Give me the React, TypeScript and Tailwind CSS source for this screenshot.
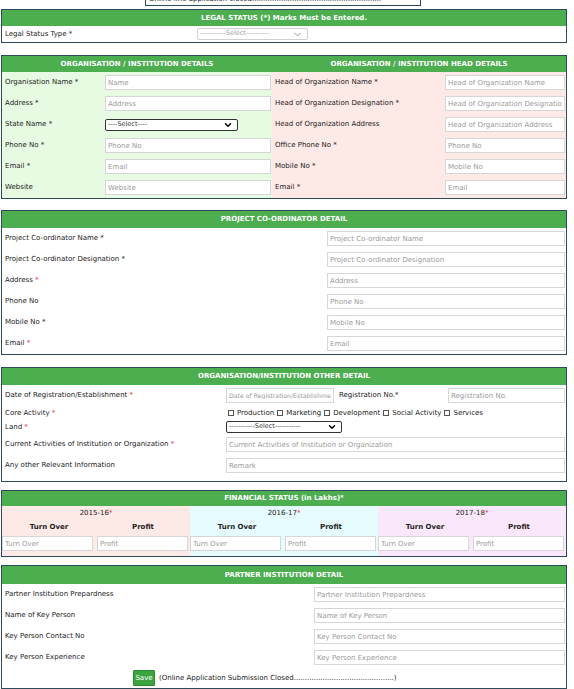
import { ChevronDown } from 'lucide-react';

const font = { fontFamily: '"DejaVu Sans", Verdana, sans-serif' };

function Header({ children, h = 'h-[15px]' }: { children: React.ReactNode; h?: string }) {
  return (
    <div className={`${h} bg-[#4cae4f] text-white font-bold text-[7px] flex items-center justify-center`}>
      {children}
    </div>
  );
}

function Star({ red }: { red?: boolean }) {
  return <span className={red ? 'text-[#e53935]' : ''}> *</span>;
}

function Input({ placeholder, className = '', small }: { placeholder: string; className?: string; small?: boolean }) {
  return (
    <input
      placeholder={placeholder}
      className={`h-[15px] bg-white border border-[#d6d6d6] px-[2px] ${
        small ? 'text-[6.2px]' : 'text-[7px]'
      } placeholder:text-[#9a9a9a] outline-none ${className}`}
    />
  );
}

function Select({ text, className = '', light }: { text: string; className?: string; light?: boolean }) {
  return (
    <div
      className={`h-[12px] bg-white rounded-[2px] border flex items-center justify-between pl-[2px] pr-[4px] text-[6.5px] ${
        light ? 'border-[#d0d0d0] text-[#a0a0a0]' : 'border-[#333] text-[#333]'
      } ${className}`}
    >
      <span>{text}</span>
      <ChevronDown size={light ? 11 : 10} strokeWidth={light ? 2 : 3.5} className={light ? 'text-[#888]' : 'text-black'} />
    </div>
  );
}

function Section({ children, className = '' }: { children: React.ReactNode; className?: string }) {
  return <div className={`border border-[#2d4b5b] ${className}`}>{children}</div>;
}

function Row({ label, star, red, placeholder, inputX }: { label: string; star?: boolean; red?: boolean; placeholder: string; inputX: string }) {
  return (
    <div className="h-[21px] flex items-center">
      <div className={`${inputX} shrink-0 pl-[3px] text-[7px] text-[#222]`}>
        {label}
        {star && <Star red={red} />}
      </div>
      <Input placeholder={placeholder} className="flex-1 min-w-0 mr-[1px]" />
    </div>
  );
}

export default function App() {
  const orgLeft: [string, boolean, string][] = [
    ['Organisation Name', true, 'Name'],
    ['Address', true, 'Address'],
    ['State Name', true, ''],
    ['Phone No', true, 'Phone No'],
    ['Email', true, 'Email'],
    ['Website', false, 'Website'],
  ];
  const orgRight: [string, boolean, string][] = [
    ['Head of Organization Name', true, 'Head of Organization Name'],
    ['Head of Organization Designation', true, 'Head of Organization Designation'],
    ['Head of Organization Address', false, 'Head of Organization Address'],
    ['Office Phone No', true, 'Phone No'],
    ['Mobile No', true, 'Mobile No'],
    ['Email', true, 'Email'],
  ];
  const coord: [string, boolean, boolean, string][] = [
    ['Project Co-ordinator Name', true, false, 'Project Co-ordinator Name'],
    ['Project Co-ordinator Designation', true, false, 'Project Co-ordinator Designation'],
    ['Address', true, true, 'Address'],
    ['Phone No', false, false, 'Phone No'],
    ['Mobile No', true, false, 'Mobile No'],
    ['Email', true, true, 'Email'],
  ];
  const partner = ['Partner Institution Prepardness', 'Name of Key Person', 'Key Person Contact No', 'Key Person Experience'];
  const years = [
    { y: '2015-16', bg: 'bg-[#fde9e5]' },
    { y: '2016-17', bg: 'bg-[#e5fbfd]' },
    { y: '2017-18', bg: 'bg-[#fbe7fb]' },
  ];

  return (
    <div className="w-[574px] h-[689px] overflow-hidden bg-white text-[#222]" style={font}>
      <div className="w-[566px] ml-[1px]">
        {/* closed notice, scrolled off top */}
        <div className="flex justify-start pl-[144px] -mt-[8px]">
          <div className="w-[276px] h-[14px] border border-[#2d4b5b] text-[7px] leading-[12px] pl-[3px] overflow-hidden">
            Online line application closed..........................................................
          </div>
        </div>

        {/* legal status */}
        <Section className="mt-[3px]">
          <Header h="h-[16px]">LEGAL STATUS (*) Marks Must be Entered.</Header>
          <div className="h-[16px] flex items-center">
            <div className="w-[195px] pl-[3px] text-[7px]">Legal Status Type *</div>
            <Select light text="-----------Select----------" className="w-[111px]" />
          </div>
        </Section>

        {/* organisation */}
        <Section className="mt-[12px] flex">
          <div className="w-[270px] bg-[#e6fbe1]">
            <Header h="h-[16px]">ORGANISATION / INSTITUTION DETAILS</Header>
            {orgLeft.map(([l, s, p]) =>
              p ? (
                <Row key={l} label={l} star={s} placeholder={p} inputX="w-[103px]" />
              ) : (
                <div key={l} className="h-[21px] flex items-center">
                  <div className="w-[103px] pl-[3px] text-[7px]">
                    {l}
                    <Star />
                  </div>
                  <Select text="----Select----" className="w-[133px]" />
                </div>
              )
            )}
          </div>
          <div className="flex-1 bg-[#fde9e5]">
            <Header h="h-[16px]">ORGANISATION / INSTITUTION HEAD DETAILS</Header>
            {orgRight.map(([l, s, p]) => (
              <Row key={l} label={l} star={s} placeholder={p} inputX="w-[173px]" />
            ))}
          </div>
        </Section>

        {/* coordinator */}
        <Section className="mt-[11px]">
          <Header h="h-[17px]">PROJECT CO-ORDINATOR DETAIL</Header>
          {coord.map(([l, s, r, p]) => (
            <Row key={l + p} label={l} star={s} red={r} placeholder={p} inputX="w-[325px]" />
          ))}
        </Section>

        {/* other detail */}
        <Section className="mt-[12px]">
          <Header h="h-[17px]">ORGANISATION/INSTITUTION OTHER DETAIL</Header>
          <div className="h-[21px] flex items-center">
            <div className="w-[224px] pl-[3px] text-[7px]">
              Date of Registration/Establishment
              <Star red />
            </div>
            <Input small placeholder="Date of Registration/Establishment" className="w-[108px]" />
            <div className="w-[114px] pl-[5px] text-[7px]">Registration No.*</div>
            <Input placeholder="Registration No." className="flex-1 min-w-0 mr-[1px]" />
          </div>
          <div className="h-[14px] flex items-center">
            <div className="w-[224px] pl-[3px] text-[7px]">
              Core Activity
              <Star red />
            </div>
            <div className="flex items-center text-[7px] pl-[2px]">
              {['Production', 'Marketing', 'Development', 'Social Activity', 'Services'].map((c) => (
                <span key={c} className="flex items-center mr-[3px]">
                  <span className="inline-block w-[6px] h-[6px] border border-[#555] mr-[3px]" />
                  {c}
                </span>
              ))}
            </div>
          </div>
          <div className="h-[14px] flex items-center">
            <div className="w-[224px] pl-[3px] text-[7px]">
              Land
              <Star red />
            </div>
            <Select text="-----------Select-----------" className="w-[116px]" />
          </div>
          <div className="h-[21px] flex items-center">
            <div className="w-[224px] pl-[3px] text-[7px]">
              Current Activities of Institution or Organization
              <Star red />
            </div>
            <Input placeholder="Current Activities of Institution or Organization" className="flex-1 min-w-0 mr-[1px]" />
          </div>
          <div className="h-[21px] flex items-center">
            <div className="w-[224px] pl-[3px] text-[7px]">Any other Relevant Information</div>
            <Input placeholder="Remark" className="flex-1 min-w-0 mr-[1px]" />
          </div>
          <div className="h-[5px]" />
        </Section>

        {/* financial */}
        <Section className="mt-[8px]">
          <Header h="h-[15px]">
            FINANCIAL STATUS (in Lakhs) <Star />
          </Header>
          <div className="grid grid-cols-3">
            {years.map((yr) => (
              <div key={yr.y} className={`${yr.bg} pb-[5px]`}>
                <div className="h-[14px] flex items-center justify-center text-[7px]">
                  {yr.y}
                  <Star red />
                </div>
                <div className="h-[14px] grid grid-cols-2 text-[7px] font-bold text-center items-center">
                  <div>Turn Over</div>
                  <div>Profit</div>
                </div>
                <div className="grid grid-cols-2 gap-[4px] pr-[2px] pt-[2px]">
                  <Input placeholder="Turn Over" className="w-full" />
                  <Input placeholder="Profit" className="w-full" />
                </div>
              </div>
            ))}
          </div>
        </Section>

        {/* partner */}
        <Section className="mt-[8px]">
          <Header h="h-[18px]">PARTNER INSTITUTION DETAIL</Header>
          {partner.map((p) => (
            <Row key={p} label={p} placeholder={p} inputX="w-[312px]" />
          ))}
          <div className="h-[20px] flex items-center pl-[131px] text-[7px]">
            <button className="h-[16px] w-[22px] bg-[#3aa53e] text-white text-[7px] border border-[#2e8a32] rounded-[1px]">
              Save
            </button>
            <span className="ml-[4px]">(Online Application Submission Closed.............................................)</span>
          </div>
        </Section>
      </div>
    </div>
  );
}
